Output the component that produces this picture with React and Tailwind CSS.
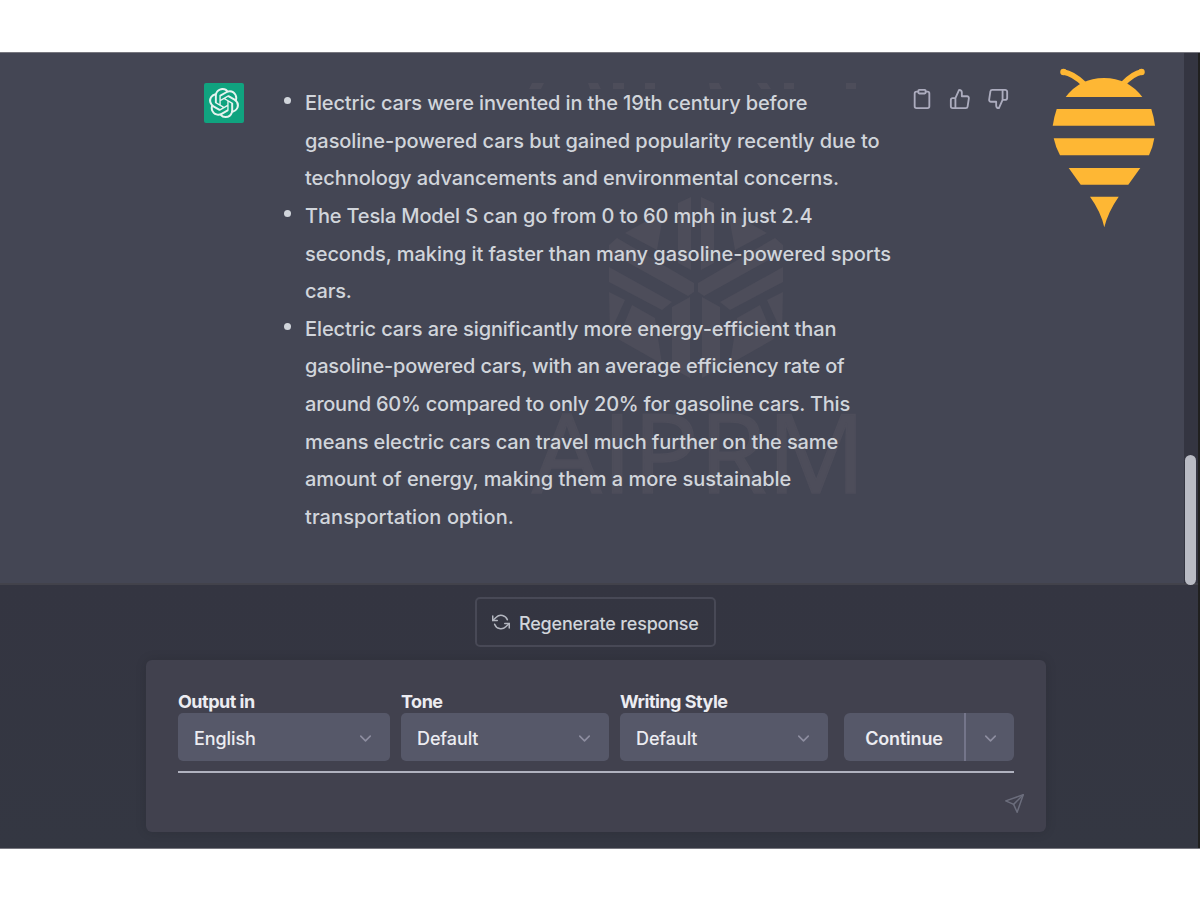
import React from "react";
import { FiClipboard, FiThumbsUp, FiThumbsDown, FiRefreshCcw, FiSend, FiChevronDown } from "react-icons/fi";
import { SiOpenai } from "react-icons/si";

const facts = [
  [
    ["Electric cars were invented in the 19th century before", "tracking-[-0.13px]"],
    ["gasoline-powered cars but gained popularity recently due to", "tracking-[-0.06px]"],
    ["technology advancements and environmental concerns.", "tracking-[-0.06px]"],
  ],
  [
    ["The Tesla Model S can go from 0 to 60 mph in just 2.4", "tracking-[-0.16px]"],
    ["seconds, making it faster than many gasoline-powered sports", "tracking-[-0.07px]"],
    ["cars.", "tracking-[-0.2px]"],
  ],
  [
    ["Electric cars are significantly more energy-efficient than", "tracking-[-0.1px]"],
    ["gasoline-powered cars, with an average efficiency rate of", "tracking-[-0.19px]"],
    ["around 60% compared to only 20% for gasoline cars. This", "tracking-[-0.23px]"],
    ["means electric cars can travel much further on the same", "tracking-[-0.11px]"],
    ["amount of energy, making them a more sustainable", "tracking-[-0.05px]"],
    ["transportation option.", "tracking-[0.08px]"],
  ],
];

const Bee = () => (
  <svg width="104" height="162" viewBox="0 0 104 162" fill="#feb734">
    <path d="M13.7 30Q28 11 52 11T90.3 30Z" />
    <path
      d="M11.5 5Q21 6.500 32 17M89.500 5Q81 6.500 71 17"
      fill="none"
      stroke="#feb734"
      strokeWidth="5.500"
      strokeLinecap="round"
    />
    <circle cx="11.500" cy="5" r="3.200" />
    <circle cx="89.500" cy="5" r="3.200" />
    <path d="M4.700 42H99.300Q102 50 103 58.700H.700Q2 50 4.700 42Z" />
    <path d="M1.700 71.300H102.300Q101 80 97 88.300H8Q3.500 80 1.700 71.300Z" />
    <path d="M16.700 101H88.300L76.300 117.700H28.700Z" />
    <path d="M38 129.700H66.700Q56 145 52.300 160.300Q49 145 38 129.700Z" />
  </svg>
);

const markHalf =
  "M625 233L664 211L657 250ZM678 203L691 197V270L678 263ZM609 245L617 238L694 283V292L688 296L609 252ZM609 267L672 302L662 310L609 282ZM609 292L625 300L610 333ZM632 305L655 318L662 364L618 339ZM672 307L690 297V378L672 368Z";

// faint tiled brand mark behind the answer
const Watermark = () => (
  <svg className="absolute left-[520px] top-[30px]" width="350" height="430" viewBox="520 83 350 430" fill="#4d4d5a">
    <path d="M532 83h12l-3 6h-12zM588 83h10l3 6h-11zM613 83h11v6h-11zM645 83h10v6h-10zM709 83h10l3 6h-12zM757 83h10l4 6h-10zM784 83h10v6h-10zM846 83h10v6h-10z" />
    <path d={markHalf} />
    <path d={markHalf} transform="translate(1392 0) scale(-1 1)" />
    <text
      x="532"
      y="493"
      textLength="334"
      lengthAdjust="spacingAndGlyphs"
      fontFamily="Open Sans, sans-serif"
      fontSize="110"
      stroke="#4d4d5a"
      strokeWidth="1.500"
    >
      AIPRM
    </text>
  </svg>
);

const Select = ({ label, value, className }) => (
  <div className={className}>
    <label className="block h-[22px] text-[18px] leading-[22px] font-bold tracking-[-0.5px] text-[#ececf1]">{label}</label>
    <button className="flex h-12 w-full items-center justify-between rounded-[5px] bg-[#565869] px-4 pt-[3px] text-[18px] font-medium tracking-[-0.1px] text-[#ececf1]">
      {value}
      <FiChevronDown size={19} strokeWidth={2} className="mr-[-1px] text-[#8e8ea0]" />
    </button>
  </div>
);

export default function App() {
  return (
    <div className="h-[899px] w-[1200px] overflow-hidden bg-white pt-[52px] font-['Inter',sans-serif]">
      <div className="flex h-[797px] border-y border-[#77777f] bg-[#343541]">
        <div className="relative flex w-[1198px] flex-col">
          <div className="relative flex h-[532px] border-b-2 border-[#42424b] bg-[#444654]">
            <Watermark />
            <div className="relative ml-[204px] mt-[30px] flex h-10 w-10 shrink-0 items-center justify-center rounded-[2px] bg-[#10a37f] text-[#e6f3ef]">
              <SiOpenai size={30} />
            </div>
            <ul className="relative ml-[39px] mt-8 w-[628px] text-[20px] leading-[37.64px] font-medium text-[#d1d5db]">
              {facts.map((lines, i) => (
                <li key={i} className="flex">
                  <span className="ml-[1px] mr-[14px] mt-[12px] h-[7px] w-[7px] rounded-full bg-[#d1d5db]" />
                  <div className="whitespace-nowrap">
                    {lines.map(([line, tracking]) => (
                      <p key={line} className={tracking}>{line}</p>
                    ))}
                  </div>
                </li>
              ))}
            </ul>
            <div className="mt-[35px] flex h-6 gap-[16px] text-[#acacbe]">
              <FiClipboard size={22} />
              <FiThumbsUp size={22} />
              <FiThumbsDown size={22} />
            </div>
            <div className="ml-[43px] mt-[14px]">
              <Bee />
            </div>
            <div className="ml-auto h-[530px] w-[14px] bg-[#343541] pt-[402px]">
              <div className="ml-px h-[130px] w-[11px] rounded-full bg-[#b9bbc4]" />
            </div>
          </div>

          <div className="flex flex-1 flex-col items-start bg-linear-to-b from-[#343541] to-[#343742]">
            <button className="ml-[475px] mt-[12px] flex h-[50px] w-[241px] items-center gap-[9px] rounded-[5px] border-2 border-[#484956] pl-[15px] text-[18px] font-medium text-[#d1d5db]">
              <FiRefreshCcw size={18} className="text-[#b4b7c0]" />
              <span className="mt-[3px] whitespace-nowrap tracking-[-0.2px]">Regenerate response</span>
            </button>
            <div className="ml-[146px] mt-[13px] h-[172px] w-[900px] rounded-[6px] bg-[#41414e] px-8 pt-[31px] shadow-[0_0_12px_rgba(0,0,0,0.12)]">
              <div className="flex items-end border-b-2 border-[#b0b2bf] pb-[10px]">
                <Select label="Output in" value="English" className="w-[212px]" />
                <Select label="Tone" value="Default" className="ml-[11px] w-[208px]" />
                <Select label="Writing Style" value="Default" className="ml-[11px] w-[208px]" />
                <div className="ml-4 flex h-12 flex-1 rounded-[6px] bg-[#565869] text-[18px] font-semibold text-[#ececf1]">
                  <span className="flex w-[122px] items-center justify-center border-r-2 border-[#74758a] pt-[3px] tracking-[-0.2px]">
                    Continue
                  </span>
                  <span className="flex flex-1 items-center justify-center pt-[2px] text-[#8e8ea0]">
                    <FiChevronDown size={19} />
                  </span>
                </div>
              </div>
              <FiSend size={21} className="ml-auto mr-[-11px] mt-5 text-[#6b6d7c]" strokeWidth={1.7} />
            </div>
          </div>
        </div>
        <div className="w-[2px] bg-[#20201f]" />
      </div>
    </div>
  );
}
